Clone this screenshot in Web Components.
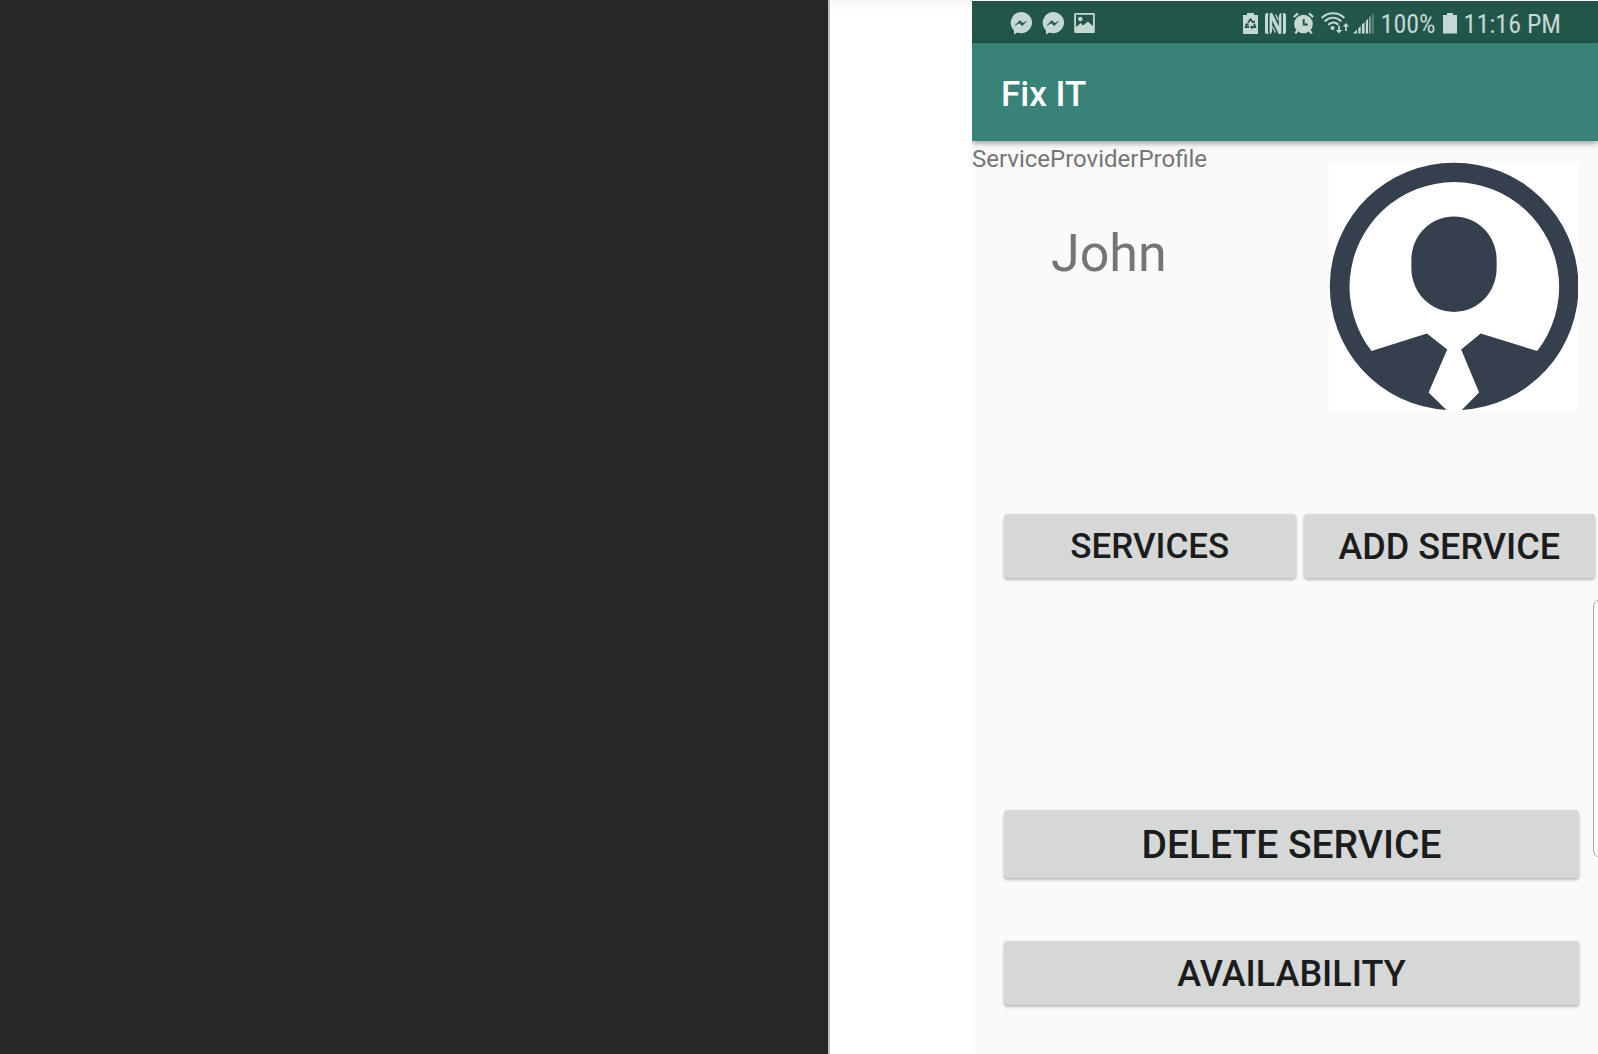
<!DOCTYPE html>
<html lang="en">
<head>
<meta charset="utf-8">
<meta name="viewport" content="width=device-width, initial-scale=1">
<title>Fix IT</title>
<style>
  body { margin: 0; background: #fff; font-family: Roboto, "Liberation Sans", sans-serif; }
</style>
</head>
<body>
<split-stage>
  <phone-screen>
    <status-bar slot="bars"></status-bar>
    <app-bar slot="bars">Fix IT</app-bar>
    <provider-profile screen="ServiceProviderProfile">John</provider-profile>
    <action-row class="pair">
      <flat-button style="--size: 35px">SERVICES</flat-button>
      <flat-button>ADD SERVICE</flat-button>
    </action-row>
    <action-row class="single" style="--top: 232px">
      <flat-button style="--size: 39px; --height: 68px">DELETE SERVICE</flat-button>
    </action-row>
    <action-row class="single" style="--top: 63px">
      <flat-button>AVAILABILITY</flat-button>
    </action-row>
  </phone-screen>
</split-stage>

<script>
const define = (name, html, setup) => customElements.define(name, class extends HTMLElement {
  constructor() {
    super();
    const t = document.createElement('template');
    t.innerHTML = html;
    this.attachShadow({ mode: 'open' }).append(t.content.cloneNode(true));
  }
  connectedCallback() { if (setup) setup(this); }
});

define('split-stage', `
<style>
  :host { display: grid; grid-template-columns: 830fr 142fr 626fr; min-height: 100vh; overflow: hidden; }
  .dark { background: #282828; border-right: 2px solid #bdbdbd; }
  .gutter { background: linear-gradient(#f6f6f6, #fff 12px); }
  main { display: grid; min-width: 0; }
</style>
<div class="dark"></div><div class="gutter"></div><main><slot></slot></main>`);

define('phone-screen', `
<style>
  :host { display: flex; flex-direction: column; position: relative; overflow: hidden; background: #fafafa; border-top: 1px solid #f6f6f6; }
  header { display: block; }
  .edge { position: absolute; right: -12px; top: 598px; width: 15px; height: 257px; border: 1px solid #a8a8a8; border-radius: 8px; background: #fcfcfc; }
</style>
<header><slot name="bars"></slot></header>
<slot></slot>
<div class="edge"></div>`);

define('status-bar', `
<style>
  :host { display: flex; box-sizing: border-box; justify-content: space-between; align-items: center; height: 42px; padding: 2px 37px 0 38px; background: #22564b; color: #c5d8d3; font-size: 26px; line-height: 40px; font-family: "Roboto Condensed", Roboto, sans-serif; }
  div { display: flex; align-items: center; }
  .left { gap: 10px; }
  .right { gap: 7px; }
  .net { gap: 4px; }
  span { padding-top: 2px; }
  svg { display: block; flex: none; fill: currentColor; }
</style>
<div class="left">
  <svg width="22" height="24" viewBox="0 0 22 24"><path fill-rule="evenodd" d="M11 1a11 10.6 0 1 1-3.600 20.600L4 23.500V19.500A10.800 10.800 0 0 1 11 1ZM4 15.200 9.700 9.300 12.700 12 17.700 9.200 12.300 14.900 9.300 12.300Z"/></svg>
  <svg width="22" height="24" viewBox="0 0 22 24"><path fill-rule="evenodd" d="M11 1a11 10.6 0 1 1-3.600 20.600L4 23.500V19.500A10.800 10.800 0 0 1 11 1ZM4 15.200 9.700 9.300 12.700 12 17.700 9.200 12.300 14.900 9.300 12.300Z"/></svg>
  <svg width="21" height="22" viewBox="0 0 21 22"><path fill-rule="evenodd" d="M1.500 1h18a1.300 1.300 0 0 1 1.300 1.300v17.400a1.300 1.300 0 0 1-1.300 1.300h-18A1.300 1.300 0 0 1 .2 19.700V2.300A1.300 1.300 0 0 1 1.500 1ZM2 2.700V14.500L3.500 14 6.500 11 9 13.500 14 9.500 17 12.500 19 14V2.700Z"/><circle cx="6.300" cy="7" r="2.200"/></svg>
</div>
<div class="right">
  <svg width="15" height="22" viewBox="0 0 15 22"><path d="M4 1h7v2h4v19H0V3h4Z"/><g fill="none" stroke="#22564b" stroke-width="1.800"><path d="M5 10.500 7.500 7.200 10 10.500M3.800 11.800 2.700 15.200H6.200M11.200 11.800 12.300 15.200H8.600"/></g><path fill="#22564b" d="M8.500 11h3.400V8ZM2 12.300l3.300-1.200.5 3ZM9.500 13v4.400L7 15.200Z"/></svg>
  <svg width="21" height="22" viewBox="0 0 21 22"><rect y="1" width="21" height="21" rx="2.500"/><path fill="#22564b" d="M3.600 1H5.200L4.600 3V20L5.200 22H3.600L3 20V3ZM15.800 1H17.400L18 3V20L17.400 22H15.800L16.400 20V3ZM7.200 8.500 13.800 22H5.800C6.800 20.500 7.200 19 7.200 17ZM7.200 1H15.200C14.200 2.500 13.800 4 13.800 6V14.500Z"/><path fill="none" stroke="currentColor" stroke-width="1.300" d="M10.600 2.500 13.400 8.300M7.500 14.500 10.500 20.500"/></svg>
  <svg width="21" height="22" viewBox="0 0 21 22"><circle cx="10.500" cy="12" r="9.300"/><path fill="none" stroke="currentColor" stroke-width="2.200" d="M.8 5 5 1.300M16 1.300 20.200 5M4.500 18.500 2.300 21.500M16.500 18.500 18.700 21.500"/><path fill="none" stroke="#22564b" stroke-width="1.900" d="M10.700 7V12.500H14.800"/></svg>
  <div class="net">
    <svg width="28" height="22" viewBox="0 0 28 22"><g fill="none" stroke="currentColor" stroke-width="2.100"><path d="M.7 6C7-.3 17-.3 23.300 6M3.800 9.500C8.500 4.500 15.500 4.500 20.200 9.500M7.200 13C10 9.800 14.500 9.800 17.300 12.700"/></g><circle cx="11.500" cy="16" r="2"/><path d="M17.200 13.500h1.700v4.500h2.300L18 21.500 14.900 18h2.300ZM24 19h1.700v-4.500H28L24.900 11 21.800 14.500H24Z"/></svg>
    <svg width="21" height="22" viewBox="0 0 21 22"><path d="M0 21.500 4 17.500V21.500ZM5.300 16.300 7.700 14V21.500H5.300ZM9 12.600 11.500 10.200V21.500H9ZM12.800 8.900 15 6.700V21.500H12.800Z"/><path opacity=".7" d="M16 5.500 17.600 4V21.500H16Z"/><path opacity=".35" d="M18.700 3 20.700 1V21.500H18.700Z"/></svg>
  </div>
  <span>100%</span>
  <svg width="14" height="22" viewBox="0 0 14 22"><path d="M4 1h6v2h4v18.500H0V3h4Z"/></svg>
  <span>11:16 PM</span>
</div>`);

define('app-bar', `
<style>
  :host { display: flex; box-sizing: border-box; align-items: center; height: 98px; padding: 5px 29px 0; background: #398277; box-shadow: 0 2px 6px rgba(0,0,0,.4); position: relative; }
  h1 { margin: 0; font-size: 35px; line-height: 42px; font-weight: 500; color: #fff; }
</style>
<h1><slot></slot></h1>`);

define('provider-profile', `
<style>
  :host { display: flex; justify-content: space-between; align-items: flex-start; padding: 4px 20px 0 0; color: #757575; }
  p { margin: 0; font-size: 24px; line-height: 28px; }
  h2 { margin: 51px 0 0 79px; font-size: 52px; line-height: 60px; font-weight: 400; }
  svg { display: block; flex: none; width: 249px; height: 249px; margin-top: 17px; background: #fff; }
</style>
<div><p></p><h2><slot></slot></h2></div>
<svg viewBox="-1 0 250 249" role="img" aria-label="Profile picture">
  <path fill="#353f4e" fill-rule="evenodd" d="M124.500 .3A124.200 124.200 0 0 1 132.300 248.500L149.700 231 131.700 187.700 151.300 171.700 208 189.300A105.200 105.200 0 1 0 41.700 189.300L97.300 171.700 117.700 187.700 99 231 117 248.500A124.200 124.200 0 0 1 124.500 .3Z"/>
  <path fill="#353f4e" d="M124.500 54.300C148 54.300 167.300 73 167.300 98V106C167.300 131 148 150 124.500 150S81.700 131 81.700 106V98C81.700 73 101 54.300 124.500 54.300Z"/>
</svg>`, el => { el.shadowRoot.querySelector('p').textContent = el.getAttribute('screen'); });

define('action-row', `
<style>
  :host { display: flex; gap: 8px; padding-left: 32px; }
  :host(.pair) { margin-top: 103px; padding-right: 3px; }
  :host(.single) { margin-top: var(--top); padding-right: 19px; }
  ::slotted(*) { flex: 1 1 0; }
</style>
<slot></slot>`);

define('flat-button', `
<style>
  :host { display: block; min-width: 0; }
  button { display: block; width: 100%; height: var(--height, 64px); margin: 0; padding: 2px 0 0; border: 0; border-radius: 4px; background: #d6d8d7; color: #1b1c1c; font: 500 var(--size, 36px)/44px Roboto, sans-serif; box-shadow: 0 2px 3px rgba(0,0,0,.25), 0 0 2px rgba(0,0,0,.1); cursor: pointer; }
</style>
<button type="button"><slot></slot></button>`);
</script>
</body>
</html>
